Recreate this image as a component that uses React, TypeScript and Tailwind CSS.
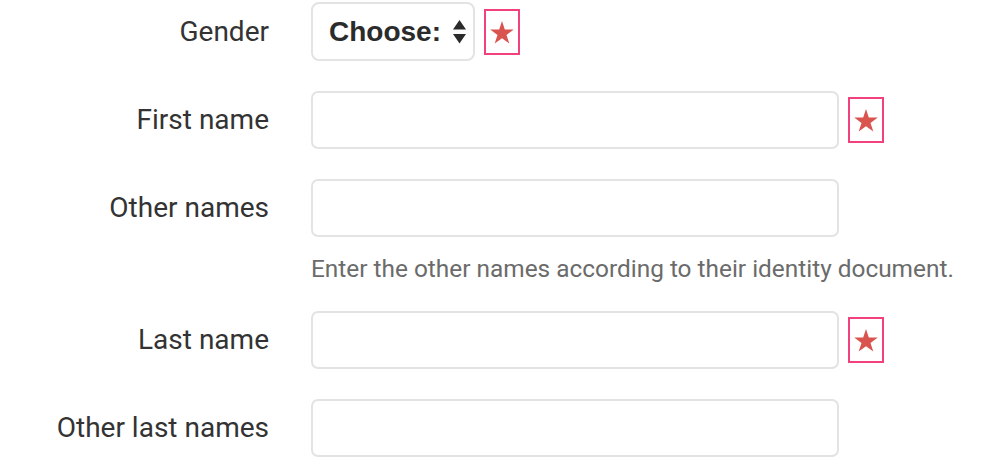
import React from "react";

interface FieldProps {
  label: string;
  required?: boolean;
  help?: string;
  children: React.ReactNode;
}

function RequiredMark() {
  return (
    <span className="ml-[9px] flex h-[46px] w-[36px] items-center justify-center border-2 border-[#f2417c]">
      <svg width="24" height="23" viewBox="0 0 24 23" className="mt-[1px]">
        <polygon
          points="12,0 14.8,8.6 23.8,8.6 16.5,13.9 19.3,22.5 12,17.2 4.7,22.5 7.5,13.9 0.2,8.6 9.2,8.6"
          fill="#d9534f"
        />
      </svg>
    </span>
  );
}

function Field({ label, required, help, children }: FieldProps) {
  return (
    <div className="mb-[30px]">
      <div className="flex items-center">
        <label className="w-[269px] shrink-0 text-right text-[28px] text-[#333]">
          {label}
        </label>
        <div className="ml-[42px] flex items-center">
          {children}
          {required && <RequiredMark />}
        </div>
      </div>
      {help && (
        <p className="ml-[311px] mt-[20px] whitespace-nowrap text-[24.4px] leading-[24px] text-[#6b6b6b]">
          {help}
        </p>
      )}
    </div>
  );
}

function TextInput() {
  return (
    <input
      type="text"
      className="box-border h-[58px] w-[528px] rounded-[7px] border-2 border-[#e3e3e3] bg-white px-3 outline-none"
    />
  );
}

export default function App() {
  return (
    <div
      className="min-h-[472px] w-[990px] bg-white pt-[2px]"
      style={{ fontFamily: "Roboto, 'Noto Sans', sans-serif" }}
    >
      <Field label="Gender" required>
        <div className="flex h-[59px] w-[164px] items-center rounded-[8px] border-2 border-[#e3e3e3] bg-white pl-[16px]">
          <span
            className="text-[28px] font-bold text-[#2b2b2b]"
            style={{ fontFamily: "'Liberation Sans', Arial, sans-serif" }}
          >
            Choose:
          </span>
          <svg width="13" height="24" viewBox="0 0 13 24" className="ml-[12px]">
            <polygon points="6.5,0 13,9.5 0,9.5" fill="#2b2b2b" />
            <polygon points="0,14 13,14 6.5,23.5" fill="#2b2b2b" />
          </svg>
        </div>
      </Field>
      <Field label="First name" required>
        <TextInput />
      </Field>
      <Field
        label="Other names"
        help="Enter the other names according to their identity document."
      >
        <TextInput />
      </Field>
      <Field label="Last name" required>
        <TextInput />
      </Field>
      <Field label="Other last names">
        <TextInput />
      </Field>
    </div>
  );
}
